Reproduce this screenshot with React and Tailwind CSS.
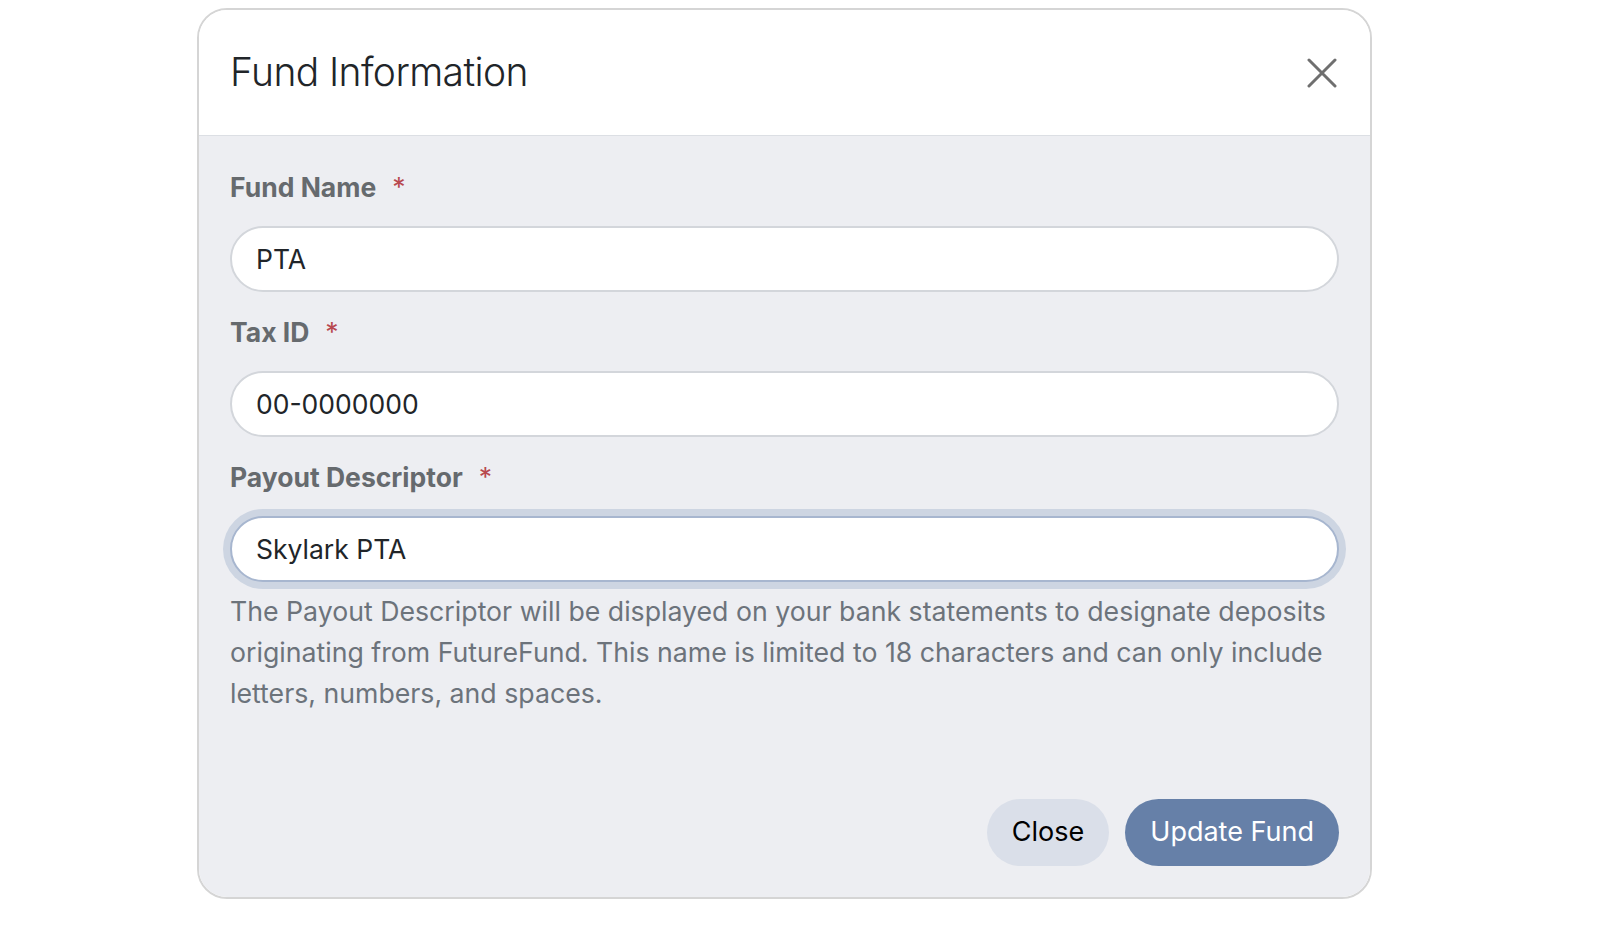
import { useState } from "react";

function Field({ label, value, focused, onChange }) {
  return (
    <div className="flex flex-col">
      <label className="text-[26.5px] font-bold leading-[39px] text-[#666a6e] mb-[19px]">
        {label}
        <span className="ml-[16px] font-normal text-[#b8494f]">*</span>
      </label>
      <input
        className={
          focused
            ? "h-[66px] w-full rounded-full bg-white px-[24px] text-[26.5px] text-[#212529] border-2 border-[#a7b6cf] ring-[7px] ring-[#cdd5e2] outline-none"
            : "h-[66px] w-full rounded-full bg-white px-[24px] text-[26.5px] text-[#212529] border-2 border-[#d3d6db] outline-none"
        }
        value={value}
        onChange={onChange}
      />
    </div>
  );
}

export default function App() {
  const [name, setName] = useState("PTA");
  const [taxId, setTaxId] = useState("00-0000000");
  const [descriptor, setDescriptor] = useState("Skylark PTA");

  return (
    <div className="min-h-screen bg-white pt-[8px] font-['Inter','Noto_Sans',sans-serif]">
      <div className="ml-[197px] w-[1175px] h-[891px] flex flex-col rounded-[30px] border-2 border-[#d5d5d5] overflow-hidden">

        {/* Header */}
        <div className="h-[126px] shrink-0 flex items-center justify-between bg-white border-b border-[#dcdfe4] pl-[31px] pr-[28px]">
          <h1 className="text-[39px] font-light text-[#212529] tracking-[-0.6px]">Fund Information</h1>
          <button className="w-[40px] h-[40px] flex items-center justify-center">
            <svg width="30" height="30" viewBox="0 0 30 30" fill="none" stroke="#6f6f6f" strokeWidth="3" strokeLinecap="round">
              <path d="M2 2 L28 28 M28 2 L2 28" />
            </svg>
          </button>
        </div>

        {/* Body */}
        <div className="flex-1 flex flex-col bg-[#edeef2] px-[31px] pt-[32px] pb-[31px]">
          <Field label="Fund Name" value={name} onChange={(e) => setName(e.target.value)} />
          <div className="mt-[21px]">
            <Field label="Tax ID" value={taxId} onChange={(e) => setTaxId(e.target.value)} />
          </div>
          <div className="mt-[21px]">
            <Field label="Payout Descriptor" value={descriptor} focused onChange={(e) => setDescriptor(e.target.value)} />
          </div>
          <p className="mt-[9px] text-[26.7px] leading-[41px] text-[#6c737b]">
            The Payout Descriptor will be displayed on your bank statements to designate deposits originating from FutureFund. This name is limited to 18 characters and can only include letters, numbers, and spaces.
          </p>

          <div className="mt-auto flex justify-end gap-[16px]">
            <button className="h-[67px] px-[25px] rounded-full bg-[#dadfe9] text-[27px] text-black">Close</button>
            <button className="h-[67px] px-[25px] rounded-full bg-[#6680a8] text-[27px] text-white">Update Fund</button>
          </div>
        </div>

      </div>
    </div>
  );
}
